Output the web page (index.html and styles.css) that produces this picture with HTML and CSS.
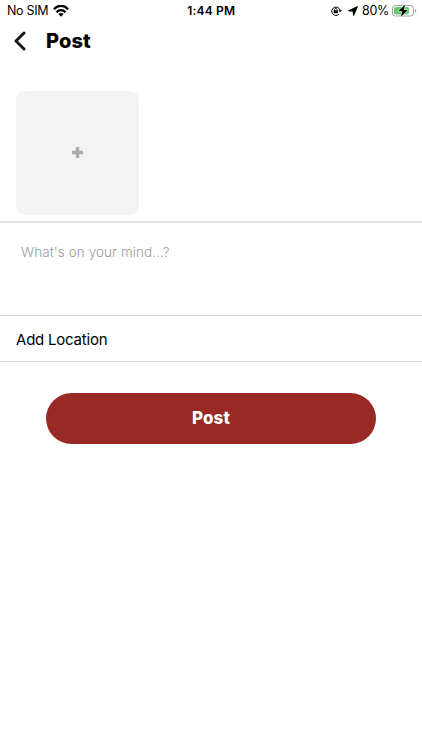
FILE: index.html
```html
<!DOCTYPE html>
<html lang="en">
<head>
<meta charset="utf-8">
<meta name="viewport" content="width=device-width, initial-scale=1">
<title>Post</title>
<link rel="stylesheet" href="styles.css">
</head>
<body>
<div class="status">
  <div class="carrier"><span>No SIM</span>
    <svg class="wifi" width="16" height="12" viewBox="0 0 16 12"><g fill="none" stroke="#000" stroke-width="2.3"><path d="M.9 4.2C5-.4 11-.4 15.1 4.2"/><path d="M3.5 7.2c2.6-2.8 6.4-2.8 9 0"/></g><path d="M5.4 9c1.5-1.4 3.7-1.4 5.2 0L8 11.7z"/></svg>
  </div>
  <div class="time">1:44 PM</div>
  <div class="indicators">
    <svg class="lock" width="11" height="10" viewBox="0 0 11 10"><path d="M8.2 8A4.2 4.2 0 1 1 9.1 4.4" fill="none" stroke="#000" stroke-width="1"/><path d="M7.5 4.2H11L9.2 6.6z"/><rect x="2.7" y="4.3" width="4.2" height="3" rx=".4"/><path d="M3.6 4.6V3.5a1.2 1.2 0 0 1 2.4 0v1.1" fill="none" stroke="#000" stroke-width=".8"/></svg>
    <svg class="arrow" width="10" height="10" viewBox="0 0 10 10"><path d="M9.3.7 5.6 9.3 5.1 5.1.7 4.7z" stroke="#000" stroke-width="1.1" stroke-linejoin="round"/></svg>
    <span class="percent">80%</span>
    <svg class="battery" width="25" height="14" viewBox="0 0 25 14"><rect x=".5" y="1.5" width="21" height="10.5" rx="3" fill="#fff" stroke="#a0a0a0"/><rect x="2" y="3" width="15" height="7.5" rx="1.7" fill="#62cc6b"/><path d="M23 5v3.6q1.3-.4 1.3-1.8T23 5z" fill="#999"/><path d="M13.3.5 6.3 7.3h4L8.7 13l7-7h-4z" stroke="#fff" stroke-width="1" paint-order="stroke"/></svg>
  </div>
</div>
<header class="header">
  <svg class="back" width="14" height="20" viewBox="0 0 14 20"><path d="M11 2 3 10l8 8" fill="none" stroke="#171717" stroke-width="2.9" stroke-linecap="round" stroke-linejoin="round"/></svg>
  <h1>Post</h1>
</header>
<main>
  <section class="media">
    <div class="upload"><svg width="11" height="11" viewBox="0 0 11 11"><path d="M5.5 0v11M0 5.5h11" stroke="#aaa" stroke-width="3.4"/></svg></div>
  </section>
  <section class="message"><span>What's on your mind...?</span></section>
  <section class="location"><span>Add Location</span></section>
  <button class="submit"><span>Post</span></button>
</main>
</body>
</html>
```
FILE: styles.css
```css
* { box-sizing: border-box; }
body { margin: 0; min-height: 750px; background: #fff; color: #000; font-family: Inter, sans-serif; }
svg { display: block; flex: none; }
.status { display: grid; grid-template-columns: 1fr auto 1fr; height: 22px; padding: 0 5px 0 7px; align-items: center; font-size: 12.5px; line-height: 22px; }
.carrier, .indicators { display: flex; align-items: center; }
.carrier { gap: 5px; letter-spacing: -.3px; }
.time { font-size: 12px; font-weight: 600; letter-spacing: .2px; transform: translateX(-.8px); }
.indicators { justify-content: flex-end; }
.arrow { margin: 0 4px 0 6px; }
.percent { letter-spacing: -.3px; }
.battery { margin-left: 3px; }
.header { display: flex; height: 38px; align-items: center; padding-left: 13px; }
h1 { margin: 0 0 0 19px; font-size: 20px; font-weight: 800; line-height: 30px; letter-spacing: .1px; }
.media { height: 163px; padding: 31px 0 0 15.5px; border-bottom: 2px solid #e2e2e4; }
.upload { display: flex; width: 123.5px; height: 123.5px; align-items: center; justify-content: center; border-radius: 9px; background: #f3f3f3; }
.message { height: 93px; padding: 18px 21px; border-bottom: 1px solid #d5d5d7; color: #999; font-size: 13.5px; font-weight: 300; line-height: 22px; letter-spacing: .08px; }
.location { display: flex; height: 46px; align-items: center; padding: 2px 16px 0; border-bottom: 1px solid #d5d5d7; font-size: 15px; letter-spacing: -.22px; }
.submit { display: flex; width: 330px; height: 51px; margin: 30.5px auto 0; padding: 0 0 1px; align-items: center; justify-content: center; border: 0; border-radius: 26px; background: #992924; color: #fff; font: 800 17px/24px Inter, sans-serif; letter-spacing: .1px; }
```
